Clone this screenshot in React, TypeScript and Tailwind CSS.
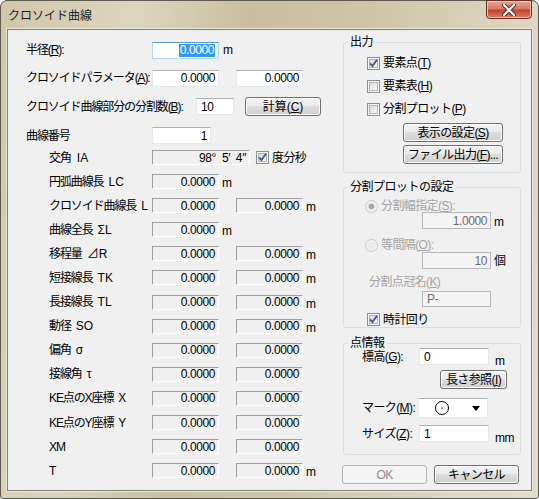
import type { ReactNode } from 'react';

const btnBase = 'flex items-center justify-center h-[19px] rounded-[3px] border text-[12px] leading-none whitespace-nowrap';
const btnOn = 'border-[#707070] text-black bg-[linear-gradient(to_bottom,#f2f2f2_0%,#ebebeb_49%,#dddddd_50%,#cfcfcf_100%)] shadow-[inset_0_0_0_1px_#fcfcfc]';
const btnOff = 'border-[#adb2b5] text-[#8d8d8d] bg-[#f4f4f4]';

function Button({ className = '', disabled, children }: { className?: string; disabled?: boolean; children: ReactNode }) {
  return <div className={`${btnBase} ${disabled ? btnOff : btnOn} ${className}`}>{children}</div>;
}

type Kind = 'edit' | 'focus' | 'ro' | 'off';

const fieldKinds: Record<Kind, string> = {
  edit: 'bg-white border border-[#e3e9ef] border-t-[#abadb3]',
  focus: 'bg-white border border-[#b7d9ed] border-t-[#5c9bcf]',
  ro: 'bg-[#f0f0f0] border border-[#ffffff] border-t-[#a0a0a0] border-l-[#a0a0a0]',
  off: 'bg-[#f4f4f4] border border-[#b6b9bc]',
};

function Field({ className = '', kind = 'edit', left, children }: { className?: string; kind?: Kind; left?: boolean; children?: ReactNode }) {
  return (
    <div className={`flex items-center shrink-0 text-[12px] leading-none tracking-[-0.4px] ${left ? 'justify-start pl-[4px]' : 'justify-end pr-[3px]'} ${fieldKinds[kind]} ${className}`}>
      {children}
    </div>
  );
}

function Check({ checked }: { checked?: boolean }) {
  return (
    <svg width="13" height="13" viewBox="0 0 13 13" className="shrink-0">
      <defs>
        <linearGradient id="cbg" x1="0" y1="0" x2="1" y2="1">
          <stop offset="0" stopColor="#d9d9d9" />
          <stop offset="1" stopColor="#fbfbfb" />
        </linearGradient>
      </defs>
      <rect x="0.5" y="0.5" width="12" height="12" fill="#f6f6f6" stroke="#8e8f8f" />
      <rect x="2.5" y="2.5" width="8" height="8" fill="url(#cbg)" stroke="#b0b4b9" />
      {checked && <path d="M3.2 6.3 L5.4 9 L10 2.8" fill="none" stroke="#3f5896" strokeWidth="1.9" />}
    </svg>
  );
}

function Radio({ checked }: { checked?: boolean }) {
  return (
    <svg width="13" height="13" viewBox="0 0 13 13" className="shrink-0">
      <circle cx="6.5" cy="6.5" r="6" fill="#f3f3f3" stroke="#c6c6c6" />
      <circle cx="6.5" cy="6.5" r="4.2" fill="#e9e9e9" />
      {checked && <circle cx="6.5" cy="6.5" r="2.8" fill="#a8a8a8" />}
    </svg>
  );
}

const rows = [
  { jp: '円弧曲線長', sym: 'LC', two: false, m: true },
  { jp: 'クロソイド曲線長', sym: 'L', two: true, m: true },
  { jp: '曲線全長', sym: 'ΣL', two: false, m: true },
  { jp: '移程量', sym: '⊿R', two: true, m: true },
  { jp: '短接線長', sym: 'TK', two: true, m: true },
  { jp: '長接線長', sym: 'TL', two: true, m: true },
  { jp: '動径', sym: 'SO', two: true, m: true },
  { jp: '偏角', sym: 'σ', two: true, m: false },
  { jp: '接線角', sym: 'τ', two: true, m: false },
  { jp: 'KE点のX座標', sym: 'X', two: true, m: false },
  { jp: 'KE点のY座標', sym: 'Y', two: true, m: false },
  { jp: 'XM', sym: '', two: true, m: false },
  { jp: 'T', sym: '', two: true, m: true },
];

const legend = 'ml-[4px] px-[2px] text-[12px] leading-[12px] tracking-[-0.5px]';
const group = 'rounded-[3px] border border-[#d5dfe5] flex flex-col';
const lbl = 'whitespace-nowrap tracking-[-1.1px]';

export default function App() {
  return (
    <div className="w-[539px] h-[499px] overflow-hidden font-['Liberation_Sans','Noto_Sans_CJK_JP',sans-serif] text-black">
      <div className="w-[539px] h-[499px] flex flex-col rounded-t-[7px] rounded-b-[3px] border border-[#5d5a52] bg-[#cec6aa] bg-[linear-gradient(100deg,#d0c7a9_0%,#ddd6bf_22%,#c9bf9f_40%,#cfc6a8_60%,#ddd6c1_85%,#e3ddcb_100%)]">
        {/* title bar */}
        <div className="h-[28px] flex items-start shrink-0">
          <div className="pl-[7px] pt-[8px] text-[12px] leading-[14px] text-[#1e1e1e]">クロソイド曲線</div>
          <div className="ml-auto mr-[6px] w-[46px] h-[19px] -mt-[1px] rounded-b-[4px] border border-[#6d2c22] bg-[linear-gradient(to_bottom,#e6a795_0%,#d57a64_45%,#c4432c_55%,#d8806a_100%)] flex items-center justify-center shadow-[inset_0_0_0_1px_#f0c2b6]">
            <svg width="14" height="12" viewBox="0 0 14 12">
              <path d="M2 1 L12 11 M12 1 L2 11" stroke="#4a3029" strokeWidth="4.2" strokeLinecap="round" />
              <path d="M2 1 L12 11 M12 1 L2 11" stroke="#ffffff" strokeWidth="2.2" strokeLinecap="round" />
            </svg>
          </div>
        </div>

        {/* client */}
        <div className="ml-[6px] mr-[6px] h-[462px] border border-[#85817a] bg-[#f0f0f0] flex text-[12px] leading-none shadow-[0_0_0_1px_#e9e4d4]">
          {/* left column */}
          <div className="w-[335px] flex flex-col pt-[6px]">
            <div className="h-[28px] flex items-center pl-[18px]">
              <div className={`w-[126px] ${lbl}`}>半径(<u>R</u>):</div>
              <Field kind="focus" className="w-[67px] h-[17px]">
                <span className="bg-[#3399ff] text-white px-[1px] leading-[13px]">0.0000</span>
              </Field>
              <span className="ml-[4px]">m</span>
            </div>
            <div className="h-[28px] flex items-center pl-[18px]">
              <div className={`w-[126px] ${lbl}`}>クロソイドパラメータ(<u>A</u>):</div>
              <Field className="w-[67px] h-[17px]">0.0000</Field>
              <Field className="w-[67px] h-[17px] ml-[17px]">0.0000</Field>
            </div>
            <div className="h-[29px] flex items-center pl-[18px]">
              <div className={`w-[170px] ${lbl}`}>クロソイド曲線部分の分割数(<u>B</u>):</div>
              <Field left className="w-[38px] h-[17px]">10</Field>
              <Button className="w-[76px] ml-[11px]">計算(<u>C</u>)</Button>
            </div>
            <div className="h-[29px] flex items-center pl-[18px]">
              <div className={`w-[126px] ${lbl}`}>曲線番号</div>
              <Field className="w-[59px] h-[17px]">1</Field>
            </div>

            <div className="flex flex-col gap-[9.1px] pl-[41px]">
              <div className="h-[15px] flex items-center">
                <div className={`w-[103px] ${lbl}`}>交角<span className="ml-[6px] tracking-normal">IA</span></div>
                <Field kind="ro" className="w-[98px] h-[15px]">98°&nbsp;&nbsp;5′&nbsp;&nbsp;4″</Field>
                <div className="ml-[6px] flex items-center gap-[3px] tracking-[-0.6px]">
                  <Check checked />
                  <span>度分秒</span>
                </div>
              </div>
              {rows.map((r) => (
                <div key={r.jp} className="h-[15px] flex items-center">
                  <div className={`w-[103px] ${lbl}`}>
                    {r.jp}
                    {r.sym && <span className="ml-[5px] tracking-normal">{r.sym}</span>}
                  </div>
                  <Field kind="ro" className="w-[67px] h-[15px]">0.0000</Field>
                  {r.two && <Field kind="ro" className="w-[67px] h-[15px] ml-[17px]">0.0000</Field>}
                  {r.m && <span className="ml-[3px] mt-[3px]">m</span>}
                </div>
              ))}
            </div>
          </div>

          {/* right column */}
          <div className="w-[178px] flex flex-col pt-[6px] tracking-[-0.6px]">
            <fieldset className={`${group} h-[137px]`}>
              <legend className={legend}>出力</legend>
              <div className="flex flex-col gap-[7px] pl-[23px] mt-[7px]">
                <div className="h-[16px] flex items-center gap-[3px]"><Check checked /><span>要素点(<u>T</u>)</span></div>
                <div className="h-[16px] flex items-center gap-[3px]"><Check /><span>要素表(<u>H</u>)</span></div>
                <div className="h-[16px] flex items-center gap-[3px]"><Check /><span>分割プロット(<u>P</u>)</span></div>
              </div>
              <Button className="w-[100px] ml-[59px] mt-[6px]">表示の設定(<u>S</u>)</Button>
              <Button className="w-[100px] ml-[59px] mt-[3px]">ファイル出力(<u>F</u>)...</Button>
            </fieldset>

            <fieldset className={`${group} h-[147px] mt-[8px]`}>
              <legend className={legend}>分割プロットの設定</legend>
              <div className="h-[12px] mt-[7px] pl-[21px] flex items-center gap-[3px] text-[#a3a3a3]">
                <Radio checked /><span>分割幅指定(<u>S</u>):</span>
              </div>
              <div className="flex items-center pl-[78px]">
                <Field kind="off" className="w-[69px] h-[17px] text-[#6d6d6d]">1.0000</Field>
                <span className="ml-[3px] mt-[3px]">m</span>
              </div>
              <div className="h-[12px] mt-[10px] pl-[21px] flex items-center gap-[3px] text-[#a3a3a3]">
                <Radio /><span>等間隔(<u>O</u>):</span>
              </div>
              <div className="flex items-center pl-[78px] mt-[1px]">
                <Field kind="off" className="w-[69px] h-[17px] text-[#6d6d6d]">10</Field>
                <span className="ml-[3px]">個</span>
              </div>
              <div className="h-[12px] mt-[7px] pl-[25px] flex items-center text-[#a3a3a3]">分割点冠名(<u>K</u>)</div>
              <div className="flex pl-[78px] mt-[3px]">
                <Field kind="off" left className="w-[69px] h-[16px] text-[#6d6d6d]">P-</Field>
              </div>
              <div className="h-[13px] mt-[6px] pl-[23px] flex items-center gap-[3px]"><Check checked /><span>時計回り</span></div>
            </fieldset>

            <fieldset className={`${group} h-[118px] mt-[9px]`}>
              <legend className={legend}>点情報</legend>
              <div className="h-[17px] -mt-[1px] pl-[18px] flex items-center">
                <div className="w-[57px] whitespace-nowrap">標高(<u>G</u>):</div>
                <Field left className="w-[70px] h-[17px]">0</Field>
                <span className="ml-[6px] mt-[8px]">m</span>
              </div>
              <Button className="w-[67px] ml-[96px] mt-[5px]">長さ参照(<u>I</u>)</Button>
              <div className="h-[20px] mt-[9px] pl-[18px] flex items-center">
                <div className="w-[56px] whitespace-nowrap">マーク(<u>M</u>):</div>
                <div className="w-[70px] h-[20px] bg-white border border-[#e3e9ef] border-t-[#abadb3] flex items-center">
                  <svg width="16" height="16" viewBox="0 0 16 16" className="ml-[15px]">
                    <circle cx="8" cy="8" r="6.5" fill="none" stroke="#000" strokeWidth="1" />
                    <rect x="7.5" y="7.5" width="1.2" height="1.2" fill="#000" />
                  </svg>
                  <svg width="8" height="5" viewBox="0 0 8 5" className="ml-auto mr-[7px]">
                    <path d="M0 0 H8 L4 5 Z" fill="#000" />
                  </svg>
                </div>
              </div>
              <div className="h-[17px] mt-[7px] pl-[18px] flex items-center">
                <div className="w-[57px] whitespace-nowrap">サイズ(<u>Z</u>):</div>
                <Field left className="w-[70px] h-[17px]">1</Field>
                <span className="ml-[6px] mt-[8px]">mm</span>
              </div>
            </fieldset>

            <div className="flex gap-[7px] mt-[10px] -ml-[1px]">
              <Button disabled className="w-[85px]">OK</Button>
              <Button className="w-[85px]">キャンセル</Button>
            </div>
          </div>
        </div>
      </div>
    </div>
  );
}
